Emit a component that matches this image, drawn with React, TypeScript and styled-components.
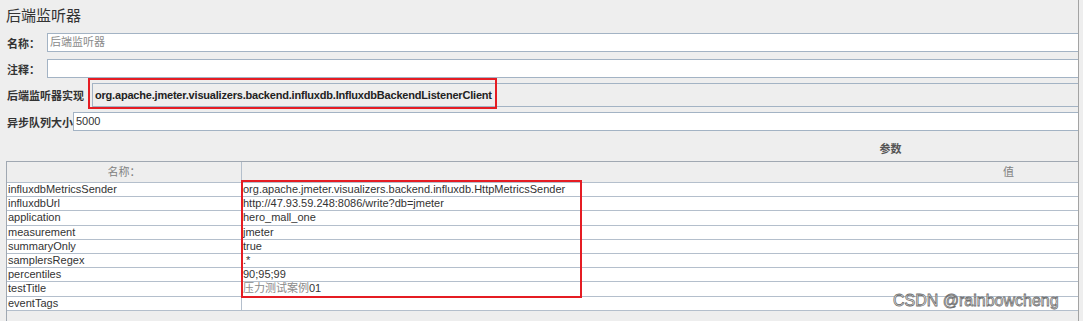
import { Fragment } from 'react';
import styled, { createGlobalStyle } from 'styled-components';

const GlobalStyle = createGlobalStyle`
  html, body {
    margin: 0;
    padding: 0;
    background: #eeeeee;
  }
  body {
    font-family: 'Liberation Sans', 'Noto Sans CJK SC', sans-serif;
  }
`;

const Frame = styled.div`
  position: relative;
  width: 1079px;
  height: 321px;
  box-sizing: border-box;
  border-right: 1px solid #a3a3a3;
  overflow: hidden;
`;

const Panel = styled.div`
  width: 1775px;
  padding: 6px 0 0 6px;
  box-sizing: border-box;
`;

const Title = styled.h1`
  margin: 0;
  height: 20px;
  font-size: 15px;
  line-height: 20px;
  font-weight: normal;
  color: #333333;
`;

const Form = styled.div`
  display: flex;
  flex-direction: column;
  margin-top: 7px;
`;

const Row = styled.div<{ $top: number }>`
  display: flex;
  align-items: center;
  margin-top: ${(p) => p.$top}px;
`;

const Label = styled.span<{ $width: number }>`
  flex-shrink: 0;
  width: ${(p) => p.$width}px;
  padding-left: 1px;
  box-sizing: border-box;
  font-size: 11px;
  font-weight: bold;
  color: #333333;
  white-space: nowrap;
`;

const TextBox = styled.div<{ $muted?: boolean }>`
  flex: 1;
  height: 19px;
  box-sizing: border-box;
  border: 1px solid #a3b3c4;
  background: #ffffff;
  padding: 0 2px;
  font-size: 11px;
  line-height: 17px;
  color: ${(p) => (p.$muted ? '#8a8a8a' : '#333333')};
  white-space: nowrap;
`;

const ClassBox = styled.div`
  flex: 1;
  height: 24px;
  box-sizing: border-box;
  border: 1px solid #a3b3c4;
  background: #eeeeee;
  padding-left: 2px;
  font-size: 11px;
  font-weight: bold;
  letter-spacing: -0.2px;
  line-height: 22px;
  color: #222222;
  white-space: nowrap;
`;

const ParamsTitle = styled.div`
  height: 30px;
  box-sizing: border-box;
  padding-top: 10px;
  text-align: center;
  font-size: 11px;
  font-weight: bold;
  line-height: 16px;
  color: #555555;
`;

const TableWrap = styled.div`
  height: 170px;
  border-left: 1px solid #a0a8b2;
  border-top: 1px solid #a0a8b2;
  background: #eeeeee;
`;

const Grid = styled.div`
  display: grid;
  grid-template-columns: 235px 1fr;
`;

const HeadCell = styled.div<{ $first?: boolean }>`
  height: 21px;
  box-sizing: border-box;
  border-bottom: 1px solid #b4bfcc;
  border-right: ${(p) => (p.$first ? '1px solid #b4bfcc' : 'none')};
  background: #eeeeee;
  text-align: center;
  font-size: 11px;
  line-height: 20px;
  color: #808080;
`;

const Cell = styled.div<{ $first?: boolean }>`
  height: 14.2px;
  box-sizing: border-box;
  border-bottom: 1px solid #b4bfcc;
  border-right: ${(p) => (p.$first ? '1px solid #b4bfcc' : 'none')};
  background: #ffffff;
  padding-left: 1px;
  font-size: 11px;
  line-height: 13px;
  color: #333333;
  white-space: nowrap;
  overflow: hidden;
`;

const Faint = styled.span`
  color: #8a8a8a;
`;

const Annotation = styled.div<{ $x: number; $y: number; $w: number; $h: number }>`
  position: absolute;
  left: ${(p) => p.$x}px;
  top: ${(p) => p.$y}px;
  width: ${(p) => p.$w}px;
  height: ${(p) => p.$h}px;
  box-sizing: border-box;
  border: 2px solid #e51c23;
  pointer-events: none;
`;

const Watermark = styled.div`
  position: absolute;
  left: 893px;
  top: 292px;
  font-family: 'Liberation Sans', sans-serif;
  font-size: 16px;
  line-height: 18px;
  color: #fafafa;
  -webkit-text-stroke: 0.8px #707070;
  white-space: nowrap;
`;

const params: { name: string; value: React.ReactNode }[] = [
  { name: 'influxdbMetricsSender', value: 'org.apache.jmeter.visualizers.backend.influxdb.HttpMetricsSender' },
  { name: 'influxdbUrl', value: 'http://47.93.59.248:8086/write?db=jmeter' },
  { name: 'application', value: 'hero_mall_one' },
  { name: 'measurement', value: 'jmeter' },
  { name: 'summaryOnly', value: 'true' },
  { name: 'samplersRegex', value: '.*' },
  { name: 'percentiles', value: '90;95;99' },
  { name: 'testTitle', value: <><Faint>压力测试案例</Faint>01</> },
  { name: 'eventTags', value: '' },
];

export default function App() {
  return (
    <>
      <GlobalStyle />
      <Frame>
        <Panel>
          <Title>后端监听器</Title>
          <Form>
            <Row $top={0}>
              <Label $width={41}>名称：</Label>
              <TextBox $muted>后端监听器</TextBox>
            </Row>
            <Row $top={7}>
              <Label $width={41}>注释：</Label>
              <TextBox />
            </Row>
            <Row $top={5}>
              <Label $width={86}>后端监听器实现</Label>
              <ClassBox>org.apache.jmeter.visualizers.backend.influxdb.InfluxdbBackendListenerClient</ClassBox>
            </Row>
            <Row $top={5}>
              <Label $width={67}>异步队列大小</Label>
              <TextBox>5000</TextBox>
            </Row>
          </Form>
          <ParamsTitle>参数</ParamsTitle>
          <TableWrap>
            <Grid>
              <HeadCell $first>名称：</HeadCell>
              <HeadCell>值</HeadCell>
              {params.map((p) => (
                <Fragment key={p.name}>
                  <Cell $first>{p.name}</Cell>
                  <Cell>{p.value}</Cell>
                </Fragment>
              ))}
            </Grid>
          </TableWrap>
        </Panel>
        <Annotation $x={88} $y={78} $w={409} $h={31} />
        <Annotation $x={241} $y={180} $w={341} $h={118} />
        <Watermark>CSDN @rainbowcheng</Watermark>
      </Frame>
    </>
  );
}
